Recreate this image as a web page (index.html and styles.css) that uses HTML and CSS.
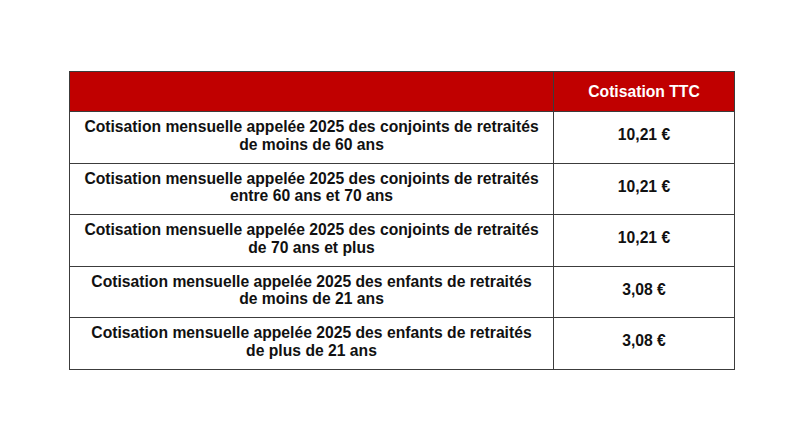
FILE: index.html
```html
<!DOCTYPE html>
<html lang="fr">
<head>
<meta charset="utf-8">
<title>Cotisations</title>
<link rel="stylesheet" href="styles.css">
</head>
<body>
<div class="page">
<table class="cotis">
  <colgroup><col class="c-label"><col class="c-value"></colgroup>
  <thead>
    <tr class="head"><th></th><th class="hval">Cotisation TTC</th></tr>
  </thead>
  <tbody>
    <tr><td class="label">Cotisation mensuelle appelée 2025 des conjoints de retraités<br>de moins de 60 ans</td><td class="val">10,21 €</td></tr>
    <tr><td class="label">Cotisation mensuelle appelée 2025 des conjoints de retraités<br>entre 60 ans et 70 ans</td><td class="val">10,21 €</td></tr>
    <tr><td class="label">Cotisation mensuelle appelée 2025 des conjoints de retraités<br>de 70 ans et plus</td><td class="val">10,21 €</td></tr>
    <tr><td class="label">Cotisation mensuelle appelée 2025 des enfants de retraités<br>de moins de 21 ans</td><td class="val">3,08 €</td></tr>
    <tr><td class="label">Cotisation mensuelle appelée 2025 des enfants de retraités<br>de plus de 21 ans</td><td class="val">3,08 €</td></tr>
  </tbody>
</table>
</div>
</body>
</html>
```
FILE: styles.css
```css
html, body {
  margin: 0;
  padding: 0;
  background: #ffffff;
}
.page {
  padding: 71px 0 0 69px;
}
.cotis {
  border-collapse: collapse;
  table-layout: fixed;
  width: 665px;
  font-family: "Liberation Sans", Arial, sans-serif;
  font-weight: bold;
  font-size: 15.7px;
  line-height: 17.5px;
  color: #111111;
}
.c-label { width: 484px; }
.c-value { width: 181px; }
.cotis th, .cotis td {
  border: 1px solid #3c3c3c;
  padding: 0;
  text-align: center;
}
.cotis .head {
  height: 40px;
}
.head th {
  background: #c00000;
  color: #ffffff;
  vertical-align: top;
}
.head .hval {
  padding-top: 11px;
}
.cotis tbody tr {
  height: 51.5px;
}
.cotis .label {
  vertical-align: top;
  padding-top: 6px;
}
.cotis .val {
  vertical-align: top;
  padding-top: 14px;
}
```
